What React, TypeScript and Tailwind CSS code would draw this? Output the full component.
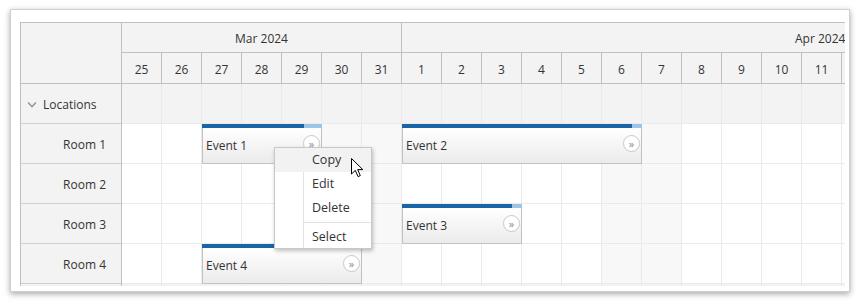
import React from "react";

const days = [25, 26, 27, 28, 29, 30, 31, 1, 2, 3, 4, 5, 6, 7, 8, 9, 10, 11, 12];
const weekend = new Set([5, 6, 12, 13]);

function BodyRow({ bg }: { bg?: string }) {
  return (
    <div className="flex h-[40px] shrink-0">
      {days.map((d, i) => (
        <div
          key={i}
          className={
            "w-[40px] h-[40px] shrink-0 border-r border-b border-[#eaeaea] " +
            (bg ? bg : weekend.has(i) ? "bg-[#f8f8f8]" : "bg-white")
          }
        />
      ))}
    </div>
  );
}

function Arrow() {
  return (
    <div className="absolute right-[1px] top-[7px] w-[17px] h-[17px] rounded-full border border-[#c8c8c8] bg-white flex items-center justify-center text-[11px] leading-none text-[#8a8a8a] pb-[1px]">
      »
    </div>
  );
}

function Event({
  left,
  top,
  width,
  dark,
  label,
}: {
  left: string;
  top: string;
  width: string;
  dark: string;
  label: string;
}) {
  return (
    <div className={"absolute h-[40px] flex flex-col " + left + " " + top + " " + width}>
      <div className="h-[4px] flex shrink-0">
        <div className={"h-[4px] bg-[#1a64a8] " + dark} />
        <div className="h-[4px] flex-1 bg-[#9cc5e6]" />
      </div>
      <div className="relative flex-1 flex items-center pl-[3px] pt-[1px] border-x border-b border-[#c2c2c2] bg-gradient-to-b from-white to-[#ebebeb] text-[#333]">
        {label}
        <Arrow />
      </div>
    </div>
  );
}

export default function App() {
  return (
    <div
      className="relative w-[860px] h-[302px] bg-white pl-[10px] pt-[9px] text-[12px] text-[#333]"
      style={{ fontFamily: '"Open Sans", "Noto Sans", sans-serif' }}
    >
      <div className="w-[840px] h-[283px] border border-[#cfcfcf] bg-white shadow-[0_2px_6px_rgba(0,0,0,0.35)] pl-[9px] pt-[12px]">
        <div className="flex w-[825px] h-[264px] overflow-hidden border-l border-t border-[#c0c0c0]">
          {/* Row headers */}
          <div className="w-[101px] shrink-0 border-r border-[#c0c0c0] bg-[#f3f3f3] flex flex-col">
            <div className="h-[61px] shrink-0 border-b border-[#c0c0c0]" />
            <div className="h-[40px] shrink-0 border-b border-[#d0d0d0] flex items-center pl-[6px] gap-[6px] pt-[2px]">
              <svg width="10" height="7" viewBox="0 0 10 7">
                <polyline points="1,1.5 5,5.5 9,1.5" fill="none" stroke="#9a9a9a" strokeWidth="1.6" />
              </svg>
              <span>Locations</span>
            </div>
            {["Room 1", "Room 2", "Room 3", "Room 4", ""].map((r, i) => (
              <div
                key={i}
                className="h-[40px] shrink-0 border-b border-[#d0d0d0] flex items-center justify-end pr-[15px] pt-[3px]"
              >
                {r}
              </div>
            ))}
          </div>
          {/* Grid */}
          <div className="relative flex-1 min-w-0 flex flex-col">
            <div className="flex h-[30px] shrink-0 border-b border-[#c0c0c0] bg-[#f3f3f3]">
              <div className="w-[280px] shrink-0 border-r border-[#c0c0c0] flex items-center justify-center pt-[3px]">
                Mar 2024
              </div>
              <div className="w-[1200px] shrink-0 flex items-center pl-[393px] pt-[3px]">Apr 2024</div>
            </div>
            <div className="flex h-[31px] shrink-0 border-b border-[#c0c0c0] bg-[#f3f3f3]">
              {days.map((d, i) => (
                <div
                  key={i}
                  className="w-[40px] shrink-0 border-r border-[#c0c0c0] flex items-center justify-center pt-[3px]"
                >
                  {i < 18 ? d : ""}
                </div>
              ))}
            </div>
            <BodyRow bg="bg-[#f3f3f3]" />
            <BodyRow />
            <BodyRow />
            <BodyRow />
            <BodyRow />
            <BodyRow bg="bg-[#f3f3f3]" />

            <Event left="left-[80px]" top="top-[101px]" width="w-[120px]" dark="w-[102px]" label="Event 1" />
            <Event left="left-[280px]" top="top-[101px]" width="w-[240px]" dark="w-[230px]" label="Event 2" />
            <Event left="left-[280px]" top="top-[181px]" width="w-[120px]" dark="w-[110px]" label="Event 3" />
            <Event left="left-[80px]" top="top-[221px]" width="w-[160px]" dark="w-[150px]" label="Event 4" />
          </div>
        </div>
      </div>

      {/* Context menu */}
      <div className="absolute left-[274px] top-[147px] w-[98px] bg-white border border-[#c8c8c8] shadow-[1px_2px_4px_rgba(0,0,0,0.25)] text-[12.5px]">
        <div className="relative">
          <div className="absolute left-[28px] top-[24px] bottom-0 w-px bg-[#e2e2e2]" />
          <div className="h-[24px] flex items-center pl-[37px] bg-[#f2f2f2]">Copy</div>
          <div className="h-[24px] flex items-center pl-[37px]">Edit</div>
          <div className="h-[24px] flex items-center pl-[37px]">Delete</div>
          <div className="h-[4px] flex items-center">
            <div className="ml-[29px] flex-1 h-px bg-[#e2e2e2]" />
          </div>
          <div className="h-[24px] flex items-center pl-[37px] pt-[3px]">Select</div>
        </div>
      </div>

      {/* Cursor */}
      <svg className="absolute left-[351px] top-[158px]" width="13" height="20" viewBox="0 0 13 20">
        <path
          d="M0.5 0.5 L0.5 16 L4.3 12.4 L7 18.6 L9.3 17.6 L6.7 11.6 L11.8 11.6 Z"
          fill="white"
          stroke="black"
          strokeWidth="1"
          strokeLinejoin="miter"
        />
      </svg>
    </div>
  );
}
